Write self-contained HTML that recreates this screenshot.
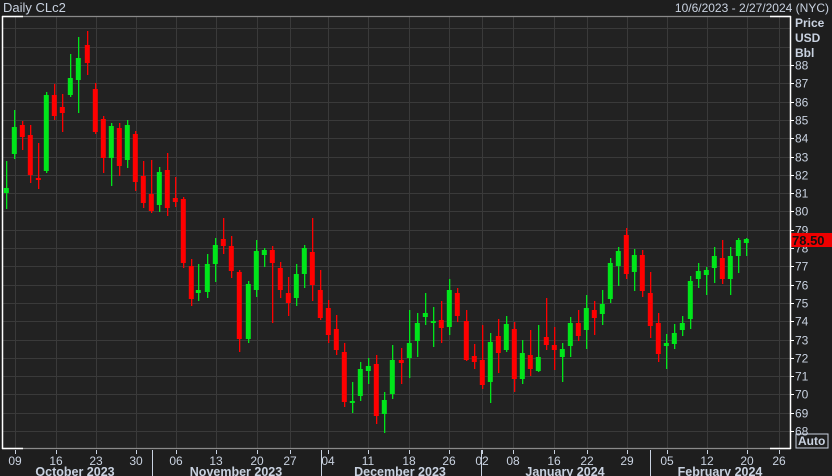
<!DOCTYPE html>
<html><head><meta charset="utf-8"><style>
html,body{margin:0;padding:0;background:#1e1e1e;width:832px;height:476px;overflow:hidden}
svg{display:block;font-family:"Liberation Sans",sans-serif}
</style></head><body>
<svg width="832" height="476" xmlns="http://www.w3.org/2000/svg">
<rect width="832" height="476" fill="#1e1e1e"/>
<rect x="2" y="16" width="788" height="432" fill="#222222"/>
<g id="grid" stroke="#3a3a3a" stroke-width="1"></g>
<g id="c"></g>
<g fill="#c9d2e0" font-size="12">
<text x="3" y="12" font-size="13">Daily CLc2</text>
<text x="829" y="12" text-anchor="end" font-size="12">10/6/2023 - 2/27/2024 (NYC)</text>
<text x="795" y="27" font-weight="bold" font-size="12">Price</text>
<text x="795" y="42" font-weight="bold" font-size="12">USD</text>
<text x="795" y="57" font-weight="bold" font-size="12">Bbl</text>
</g>
<g id="ax" fill="#c9d2e0" font-size="12"></g>
<rect x="791" y="233" width="41" height="14" fill="#ee0000"/>
<text x="792" y="245" font-size="13" font-weight="bold" fill="#111" font-family="Liberation Sans">78.50</text>
<rect x="796" y="434" width="32" height="14" fill="none" stroke="#c9d2e0" stroke-width="1"/>
<text x="798" y="445" font-size="12" font-weight="bold" fill="#c9d2e0">Auto</text>
<g stroke="#8a8a8a" stroke-width="1.2" fill="none">
<line x1="2.5" y1="16.5" x2="790.5" y2="16.5"/>
<line x1="2.5" y1="448.5" x2="790.5" y2="448.5"/>
</g>
<g stroke="#ffffff" stroke-width="1.5" fill="none">
<line x1="2.5" y1="16" x2="2.5" y2="449"/>
<line x1="790.5" y1="16" x2="790.5" y2="449"/>
<line x1="2" y1="16.5" x2="23" y2="16.5"/>
<line x1="2" y1="448.5" x2="23" y2="448.5"/>
<line x1="770" y1="16.5" x2="791" y2="16.5"/>
<line x1="770" y1="448.5" x2="791" y2="448.5"/>
</g>
<script>
(function(){
var ns="http://www.w3.org/2000/svg";
function el(t,a,p,txt){var e=document.createElementNS(ns,t);for(var k in a)e.setAttribute(k,a[k]);if(txt!=null)e.textContent=txt;p.appendChild(e);return e;}
var g=document.getElementById('grid'),ax=document.getElementById('ax'),c=document.getElementById('c');
for(var p=68;p<=91;p++){var y=Math.round(65+(88-p)*18.3)+0.5;if(y<17||y>447)continue;el('line',{x1:3,x2:790,y1:y,y2:y},g);
 if(p<=88){el('line',{x1:790,x2:794,y1:y,y2:y,stroke:'#fff'},ax);el('text',{x:795,y:y+4},ax,String(p));}}
var d=[[15,'09'],[56,'16'],[96,'23'],[136,'30'],[176,'06'],[216,'13'],[257,'20'],[290,'27'],[328,'04'],[368,'11'],[409,'18'],[449,'26'],[482,'02'],[513,'08'],[554,'16'],[587,'22'],[627,'29'],[667,'05'],[707,'12'],[747,'20'],[779,'26']];
d.forEach(function(a){var x=a[0]+0.5;if(x<790)el('line',{x1:x,x2:x,y1:17,y2:448},g);
 el('line',{x1:x,x2:x,y1:450,y2:454,stroke:'#c9d2e0'},ax);el('text',{x:a[0],y:465,'text-anchor':'middle'},ax,a[1]);});
[152,321,481,650].forEach(function(x){el('line',{x1:x+0.5,x2:x+0.5,y1:450,y2:476,stroke:'#c9d2e0'},ax);});
[[75,'October 2023'],[236,'November 2023'],[400,'December 2023'],[565,'January 2024'],[720,'February 2024']].forEach(function(a){
 el('text',{x:a[0],y:476,'text-anchor':'middle','font-weight':'bold','font-size':'12.5'},ax,a[1]);});
var C=[
[6,'g',188,193,161,209],[14,'g',127,154,110,159],[22,'r',125,137,121,150],[30,'r',135,175,125,183],[38,'r',178,180,143,189],
[46,'g',95,171,92,173],[54,'r',95,116,84,120],[62,'r',107,113,94,132],[70,'g',78,95,54,97],[78,'g',58,80,37,113],
[87,'r',45,63,31,75],[95,'r',89,132,83,134],[103,'r',119,158,116,173],[111,'g',126,158,123,186],[119,'r',128,166,123,176],
[127,'g',125,160,120,168],[135,'r',134,182,131,191],[143,'r',176,203,161,208],[151,'r',194,211,160,213],[159,'g',172,205,167,212],
[167,'r',170,208,153,216],[175,'r',198,202,177,207],[183,'r',199,263,197,268],[191,'r',266,299,259,306],[198,'g',290,293,264,301],
[207,'g',264,292,254,298],[215,'g',245,264,238,282],[223,'r',239,246,218,254],[231,'r',246,271,236,278],[239,'r',272,339,270,352],
[248,'g',284,339,281,343],[256,'g',251,290,240,297],[264,'g',250,255,248,267],[272,'r',250,263,246,323],[280,'r',268,290,262,298],
[288,'r',293,303,277,316],[296,'g',274,298,264,306],[304,'g',248,274,245,288],[312,'r',252,285,218,301],[320,'r',290,318,270,320],
[328,'r',308,335,300,343],[336,'r',329,350,315,355],[344,'r',352,402,343,407],[352,'g',401,403,382,413],[360,'g',369,396,362,401],
[368,'g',366,371,358,384],[376,'r',364,416,355,424],[384,'g',400,414,392,433],[392,'g',360,394,345,399],[401,'r',360,363,348,384],
[409,'g',343,358,310,378],[417,'g',323,341,313,357],[425,'g',313,317,293,325],[433,'g',321,323,307,347],[441,'r',320,328,301,343],
[449,'g',290,327,279,335],[457,'r',293,316,288,322],[466,'r',321,360,310,361],[474,'r',356,362,344,369],[482,'r',360,385,325,389],
[490,'g',342,382,333,403],[498,'r',336,353,319,373],[506,'g',324,350,316,352],[514,'r',329,379,322,392],[522,'g',353,379,340,384],
[530,'r',355,369,330,376],[538,'g',357,371,325,372],[546,'r',337,345,298,350],[554,'r',345,350,327,370],[562,'g',349,357,343,382],
[570,'g',323,346,317,357],[578,'r',323,336,310,341],[586,'g',308,330,295,349],[594,'r',310,318,301,335],[602,'g',304,314,290,325],
[610,'g',263,299,258,303],[618,'g',251,266,247,286],[626,'r',235,274,228,279],[634,'g',255,272,249,291],[642,'r',255,291,250,297],
[650,'r',293,326,272,338],[658,'r',323,354,313,362],[666,'g',343,346,334,369],[674,'g',333,344,324,349],[682,'g',323,330,316,336],
[690,'g',281,319,276,329],[698,'g',271,279,263,288],[706,'g',270,275,267,295],[714,'g',256,268,247,283],[722,'r',258,279,240,284],
[730,'g',256,279,247,295],[738,'g',240,256,238,273],[746,'g',239,243,238,256]];
C.forEach(function(k){var col=k[1]=='g'?'#00e61a':'#ff0000';
 el('rect',{x:k[0],y:k[4],width:1.3,height:k[5]-k[4],fill:col},c);
 el('rect',{x:k[0]-2.2,y:k[2],width:5,height:Math.max(2,k[3]-k[2]),fill:col},c);});
})();
</script>
</svg>
</body></html>
